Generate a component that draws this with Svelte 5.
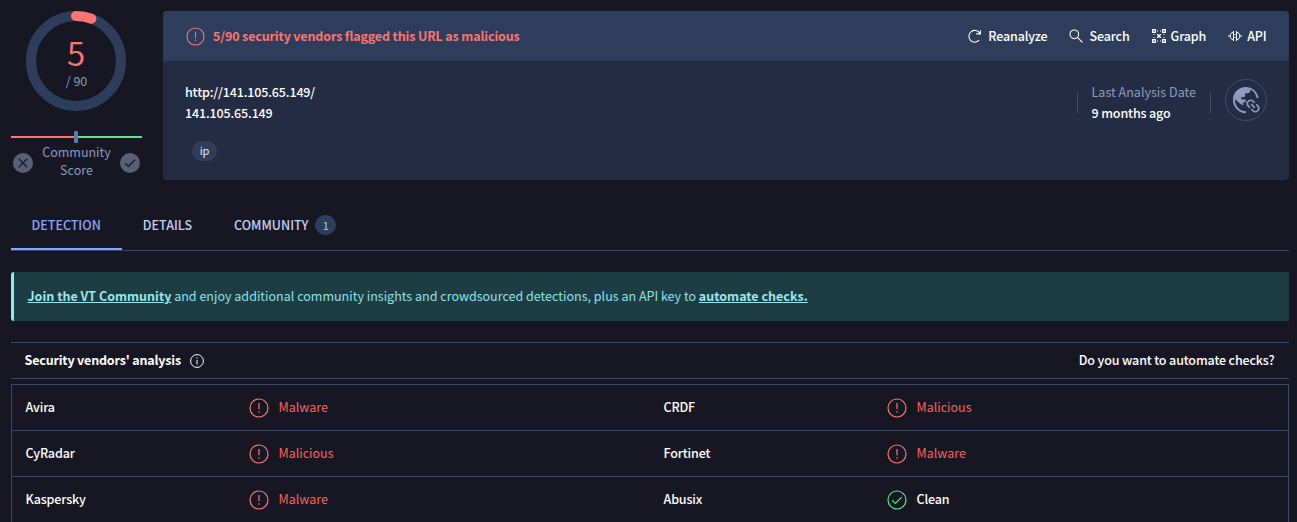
<script>
  const rows = [
    [['Avira', 'Malware'], ['CRDF', 'Malicious']],
    [['CyRadar', 'Malicious'], ['Fortinet', 'Malware']],
    [['Kaspersky', 'Malware'], ['Abusix', 'Clean']]
  ];
</script>

{#snippet alertIcon(size, w)}
  <svg width={size} height={size} viewBox="0 0 20 20" fill="none" stroke="#ff7470" stroke-width={w}>
    <circle cx="10" cy="10" r="9" />
    <path d="M10 5v6.2M10 13.2v1.6" />
  </svg>
{/snippet}

{#snippet checkIcon()}
  <svg width="20" height="20" viewBox="0 0 20 20" fill="none" stroke="#5be584" stroke-width="1.2">
    <circle cx="10" cy="10" r="9" />
    <path d="M5.2 10.2l3.2 3.2 6.2-6.2" />
  </svg>
{/snippet}

<main>
  <section class="summary">
    <aside>
      <div class="ring">
        <svg width="100" height="100" viewBox="0 0 100 100" fill="none" stroke-width="10">
          <circle cx="50" cy="50" r="45" stroke="#2f3d5c" />
          <path d="M50 5A45 45 0 0 1 65.4 7.7" stroke="#ff7470" stroke-linecap="round" />
        </svg>
        <div class="score"><span class="num">5</span><span class="total">/ 90</span></div>
      </div>
      <div class="gauge"><i class="bad"></i><i class="mark"></i><i class="good"></i></div>
      <div class="community">
        <svg width="20" height="20" viewBox="0 0 20 20" stroke="#1b1f30" stroke-width="1.5" fill="none"><circle cx="10" cy="10" r="10" fill="#576074" stroke="none" /><path d="M5.8 5.8l8.4 8.4M14.2 5.8l-8.4 8.4" /></svg>
        <span>Community<br />Score</span>
        <svg width="20" height="20" viewBox="0 0 20 20" stroke="#1b1f30" stroke-width="1.5" fill="none"><circle cx="10" cy="10" r="10" fill="#576074" stroke="none" /><path d="M5 10.2l3.4 3.3 6.6-6.7" /></svg>
      </div>
    </aside>

    <article>
      <header>
        <div class="verdict">{@render alertIcon(19, 1.1)}<b>5/90 security vendors flagged this URL as malicious</b></div>
        <nav>
          <span class="reanalyze"><svg width="14" height="14" viewBox="0 0 14 14" fill="none" stroke="#fff" stroke-width="1.1"><path d="M11.2 11.2A5.9 5.9 0 1 1 11.8 4.2M12.4 1.2v3.7H8.2" /></svg>Reanalyze</span>
          <span class="search"><svg width="14" height="14" viewBox="0 0 14 14" fill="none" stroke="#fff" stroke-width="1.1"><circle cx="5.3" cy="5.3" r="4.3" /><path d="M8.4 8.4l5 5" /></svg>Search</span>
          <span class="graph"><svg width="14" height="14" viewBox="0 0 14 14" fill="none" stroke="#fff" stroke-width="1.3"><path d="M.7.7h2.6v2.6H.7zM10.7.7h2.6v2.6h-2.6zM.7 10.7h2.6v2.6H.7zM10.7 10.7h2.6v2.6h-2.6z" /><path d="M5 2h1M8 2h1M5 12h1M8 12h1M2 5v1M2 8v1M12 5v1M12 8v1" stroke-width="1" /><path d="M4.9 4.9l4.2 4.2M9.1 4.9L4.9 9.1" stroke-width="1" /><path d="M5.5 5.5h3v3h-3z" fill="#fff" stroke="none" /></svg>Graph</span>
          <span class="api"><svg width="14" height="12" viewBox="0 0 14 12" fill="none" stroke="#fff" stroke-width="1"><path d="M0 6h2M12 6h2M5.5 1v10M5.5 2.5C3.2 2.5 2.2 4 2.2 6s1 3.5 3.3 3.5M8.5 1v10M8.5 2.5c2.3 0 3.3 1.5 3.3 3.5s-1 3.5-3.3 3.5" /><path d="M6 4.5h2M6 7.5h2" opacity=".55" /></svg>API</span>
        </nav>
      </header>
      <div class="body">
        <div class="target">
          <p>http://141.105.65.149/</p>
          <p>141.105.65.149</p>
          <span class="tag">ip</span>
        </div>
        <div class="date">
          <div class="stamp"><span>Last Analysis Date</span><p>9 months ago</p></div>
          <div class="globe">
            <svg width="28" height="28" viewBox="0 0 28 28" fill="none">
              <path d="M14 26.2A12.1 12.1 0 0 1 2 14 12.1 12.1 0 0 1 14 2c5.9 0 10.4 4 11.7 10" stroke="#8c9bbd" stroke-width="2" />
              <path d="M1.3 11.5C2.2 5.5 7 1.4 13 1.4c2.3 0 4 .4 5.2 1v2.4c0 1.4-1.2 2.5-2.7 2.5h-2.4v2.4c0 .8-.6 1.3-1.3 1.3H9.3v2.6h4.4v2.6h-2.5v3.3L7.5 17.3z" fill="#8c9bbd" />
              <g transform="rotate(45 21 20)" stroke="#8c9bbd" stroke-width="1.7"><path d="M19.9 16.6h-2.2a3.4 3.4 0 0 0 0 6.8h2.2M22.1 16.6h2.2a3.4 3.4 0 0 1 0 6.8h-2.2M18.4 20h5.2" /></g>
            </svg>
          </div>
        </div>
      </div>
    </article>
  </section>

  <div class="tabs">
    <span class="active">DETECTION</span>
    <span>DETAILS</span>
    <span>COMMUNITY<em>1</em></span>
  </div>

  <div class="banner"><p><b>Join the VT Community</b> and enjoy additional community insights and crowdsourced detections, plus an API key to <b>automate checks.</b></p></div>

  <div class="heading">
    <b>Security vendors' analysis</b>
    <svg width="14" height="14" viewBox="0 0 14 14" fill="none" stroke="#fff" stroke-width="1"><circle cx="7" cy="7" r="6.4" /><path d="M7 6v4.4M7 3.4v1.3" /></svg>
    <span>Do you want to automate checks?</span>
  </div>

  <div class="table">
    {#each rows as row}
      <div class="row">
        {#each row as [vendor, result]}
          <div class="cell">
            <span class="vendor">{vendor}</span>
            {#if result === 'Clean'}{@render checkIcon()}{:else}{@render alertIcon(20, 1.2)}{/if}
            <span class="result" class:clean={result === 'Clean'}>{result}</span>
          </div>
        {/each}
      </div>
    {/each}
  </div>
</main>

<style>
  :global(body) { background: #171723; overflow: hidden; }
  main {
    box-sizing: border-box; width: 1297px; height: 522px; overflow: hidden;
    padding: 11px 8px 0 11px; background: #171723; color: #fff;
    font: 500 12.5px/21px "Noto Sans CJK SC", "Noto Sans", sans-serif;
    letter-spacing: -0.14px;
  }
  svg { display: block; flex: none; }
  p { margin: 0; }
  .summary { display: flex; gap: 21px; height: 169px; }
  aside { width: 131px; flex: none; color: #8c9bbd; font-weight: 400; letter-spacing: 0; }
  .ring { display: grid; width: 100px; margin-left: 15px; }
  .ring > * { grid-area: 1 / 1; }
  .score { display: flex; flex-direction: column; align-items: center; padding-top: 20px; }
  .num { font-size: 33px; line-height: 42px; color: #ff7470; font-weight: 350; }
  .total { line-height: 16px; padding-left: 1px; }
  .gauge { display: flex; align-items: center; height: 12px; margin-top: 20px; }
  .gauge i { height: 2px; flex: 1; }
  .gauge .bad { flex: 0 0 63px; background: #ff7470; }
  .gauge .good { background: #5be584; }
  .gauge .mark { flex: none; width: 4px; height: 12px; border-radius: 1px; background: #5c78b3; }
  .community { display: flex; justify-content: space-between; align-items: center; padding: 0 2px; line-height: 18px; text-align: center; }
  .community svg { margin-top: 4px; }
  article { flex: 1; background: #242c44; border-radius: 4px; overflow: hidden; }
  header { display: flex; align-items: center; justify-content: space-between; height: 50px; padding: 0 22.5px 0 23px; background: #2f3d5c; }
  .verdict { display: flex; align-items: center; gap: 8px; color: #ff7470; }
  .verdict b { margin-top: -2px; }
  nav { display: flex; gap: 22px; }
  nav span { display: flex; align-items: center; gap: 6px; margin-top: -2px; }
  nav svg { margin-top: 2px; }
  nav .graph { gap: 5px; }
  nav .api { gap: 5px; }
  .body { display: flex; justify-content: space-between; padding: 20px 22px 0; }
  .tag { display: block; width: 25px; height: 20px; margin: 18px 0 0 7px; border-radius: 10px; background: #2f3d5c; text-align: center; font-size: 11px; line-height: 19px; font-weight: 400; color: #e6ebf8; }
  .date { display: flex; align-items: flex-start; gap: 14px; }
  .stamp { position: relative; padding: 0 15px; }
  .stamp span { color: #8c9bbd; font-weight: 400; letter-spacing: 0.02px; }
  .stamp::before, .stamp::after { content: ""; position: absolute; top: 12px; height: 20px; width: 1px; background: #3d4c6e; }
  .stamp::before { left: 0; }
  .stamp::after { right: 0; }
  .globe { box-sizing: border-box; display: grid; place-items: center; width: 42px; height: 42px; margin-top: -2px; border: 1px solid #3d4c6e; border-radius: 50%; }
  .tabs { display: flex; height: 49px; margin-top: 21px; border-bottom: 1px solid #36456a; color: #c3d0f3; letter-spacing: 0; }
  .tabs span { display: flex; align-items: center; height: 47px; padding: 0 21px; border-bottom: 2px solid transparent; }
  .tabs .active { padding: 0 21px 0 20.5px; color: #8aa4ff; border-color: #8aa4ff; }
  em { width: 21px; height: 20px; margin: 1px 0 0 7px; border-radius: 10px; background: #2f3d5c; color: #92dbe7; font: 400 11px/20px "Noto Sans CJK SC", sans-serif; text-align: center; }
  .banner { box-sizing: border-box; height: 49px; margin-top: 21px; padding: 13px 13.5px; border-left: 3px solid #98e6ec; border-radius: 3px 0 0 3px; background: #1e3c43; color: #8fe1e9; font-weight: 400; letter-spacing: 0.01px; }
  .banner b { text-decoration: underline; color: #9ae8ed; }
  .heading { box-sizing: border-box; display: flex; align-items: center; height: 37px; margin-top: 21px; padding: 0 14.5px 0 13.5px; border: solid #3d4767; border-width: 1px 0; }
  .heading b { letter-spacing: -0.17px; margin-top: -2px; }
  .heading svg { margin-left: 9px; }
  .heading span { margin: -2px 0 0 auto; }
  .table { margin-top: 5px; border: 1px solid #3d4767; }
  .row { display: grid; grid-template-columns: 638px 1fr; height: 45px; border-bottom: 1px solid #3d4767; }
  .cell { display: flex; align-items: center; padding-left: 13.5px; }
  .vendor { width: 223.5px; }
  .vendor, .result { margin-top: -2px; }
  .result { margin-left: 9.5px; color: #ff5f5c; font-weight: 400; letter-spacing: 0; }
  .clean { color: #fff; font-weight: 500; letter-spacing: -0.13px; }
</style>
